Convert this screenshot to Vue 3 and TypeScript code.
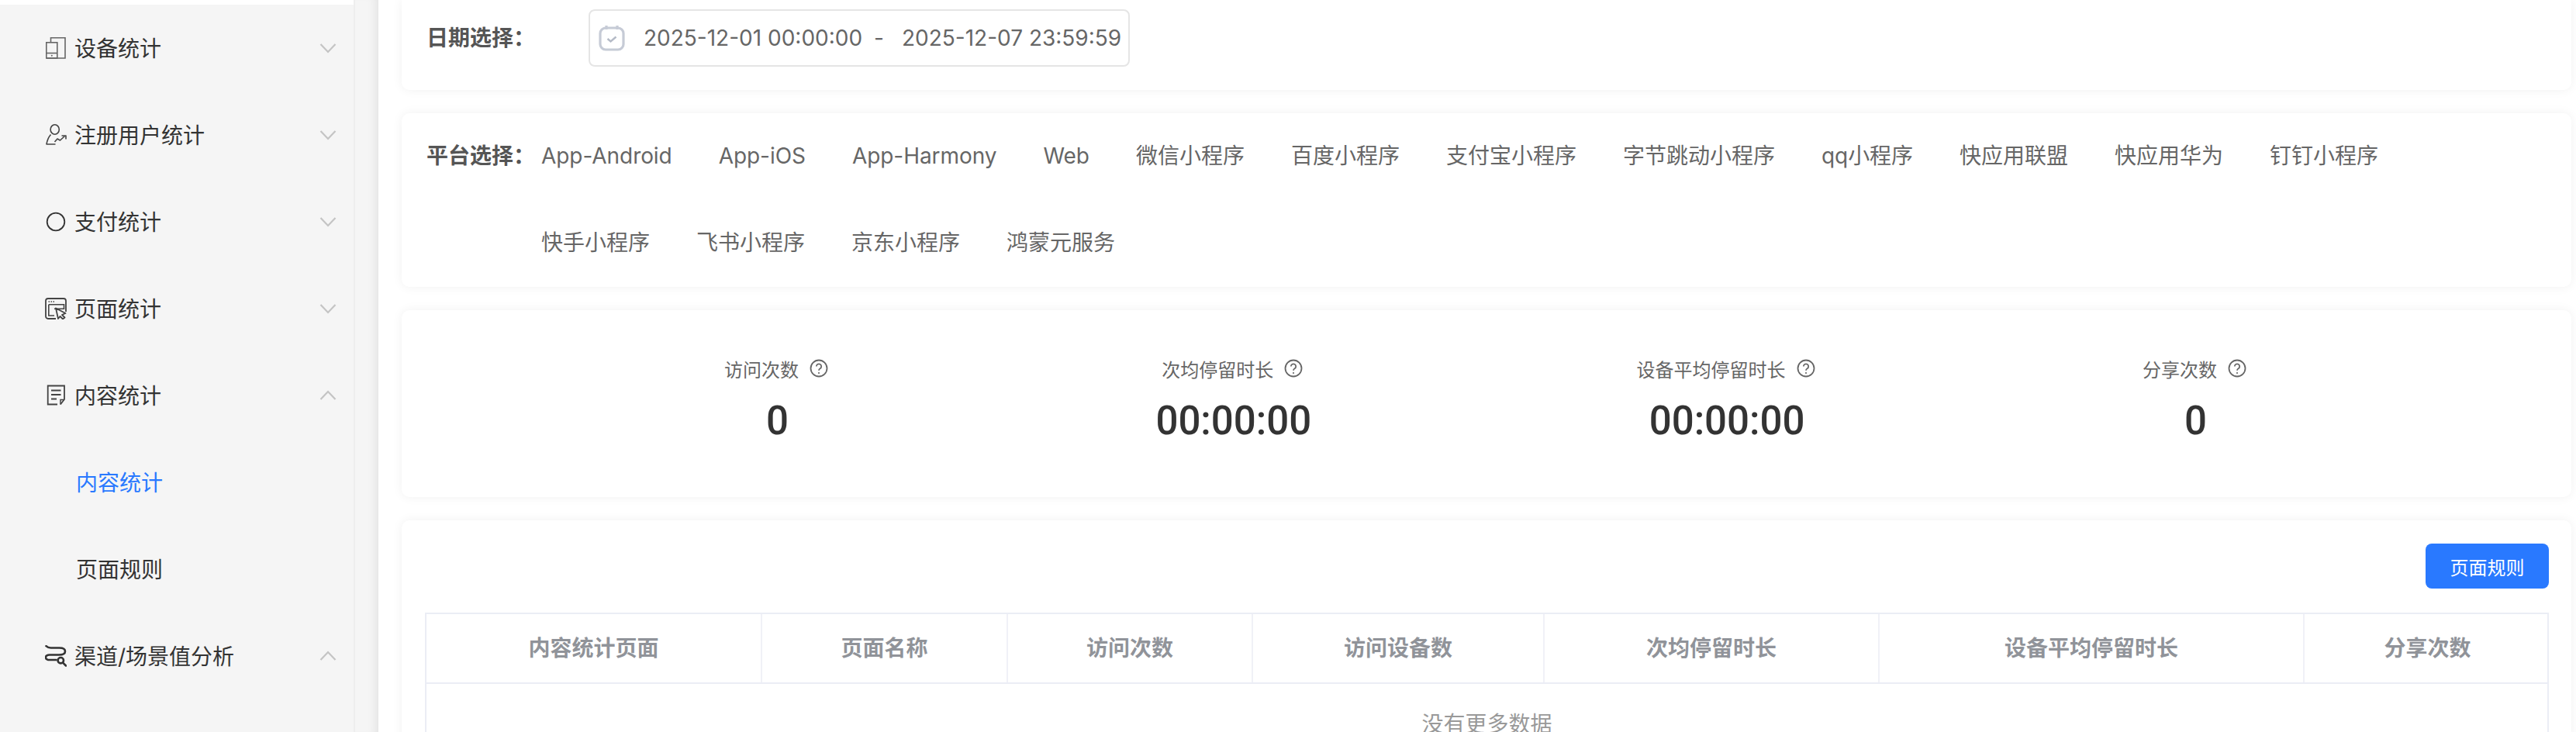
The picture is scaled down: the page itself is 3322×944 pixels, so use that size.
<script setup lang="ts">
interface MenuItem { label: string; icon: string; open?: boolean; child?: boolean; active?: boolean }
const menu: MenuItem[] = [
  { label: '设备统计', icon: 'device' },
  { label: '注册用户统计', icon: 'user' },
  { label: '支付统计', icon: 'pay' },
  { label: '页面统计', icon: 'page' },
  { label: '内容统计', icon: 'doc', open: true },
  { label: '内容统计', icon: '', child: true, active: true },
  { label: '页面规则', icon: '', child: true },
  { label: '渠道/场景值分析', icon: 'channel', open: true },
]
const platforms = ['App-Android', 'App-iOS', 'App-Harmony', 'Web', '微信小程序', '百度小程序', '支付宝小程序', '字节跳动小程序', 'qq小程序', '快应用联盟', '快应用华为', '钉钉小程序', '快手小程序', '飞书小程序', '京东小程序', '鸿蒙元服务']
const stats = [
  { label: '访问次数', value: '0' },
  { label: '次均停留时长', value: '00:00:00' },
  { label: '设备平均停留时长', value: '00:00:00' },
  { label: '分享次数', value: '0' },
]
const columns = [
  { label: '内容统计页面', width: 433 },
  { label: '页面名称', width: 317 },
  { label: '访问次数', width: 316 },
  { label: '访问设备数', width: 376 },
  { label: '次均停留时长', width: 432 },
  { label: '设备平均停留时长', width: 548 },
  { label: '分享次数', width: 317 },
]
const isLatin = (p: string) => /^[A-Za-z]/.test(p)
</script>

<template>
  <div class="page">
    <aside class="side">
      <div class="strip"></div>
      <div v-for="(m, i) in menu" :key="i" class="row" :class="{ child: m.child, active: m.active }">
        <svg v-if="m.icon === 'device'" class="ico" viewBox="0 0 28 28" fill="none" stroke="#666" stroke-width="1.6">
          <path d="M7.500 6V.8H26V27H2" />
          <rect x="1.800" y="6.800" width="14" height="20.200" />
          <path d="M1.800 20.500h14" />
          <circle cx="8.800" cy="23.800" r="1" fill="#666" stroke="none" />
        </svg>
        <svg v-else-if="m.icon === 'user'" class="ico" viewBox="0 0 28 28" fill="none" stroke="#444" stroke-width="1.6" stroke-linejoin="round">
          <ellipse cx="12.700" cy="7" rx="5.600" ry="6.200" />
          <path d="M7.500 13.500C4.500 17 2.800 21 2 26h11.500" />
          <path d="M12.500 23l3.500-4 3.500 2 6-5.500" />
          <path d="M21.500 15H27v4.500" />
        </svg>
        <svg v-else-if="m.icon === 'pay'" class="ico" viewBox="0 0 28 28" fill="none" stroke="#333" stroke-width="1.8">
          <circle cx="14" cy="14" r="11.300" />
        </svg>
        <svg v-else-if="m.icon === 'page'" class="ico" viewBox="0 0 28 28" fill="none" stroke="#444" stroke-width="1.8">
          <path d="M14 27H4a3 3 0 0 1-3-3V4a3 3 0 0 1 3-3h20a3 3 0 0 1 3 3v14" />
          <path d="M4.800 8.800h19.700v5.500H12M4.800 8.800V23H12" stroke-width="1.600" />
          <path d="M14 13.500l12.500 6.500-4.500 2 3.500 3.500-2.500 2-3.500-3.500-2.500 3z" stroke-linejoin="round" />
          <path d="M4.500 5h1.500M7.500 5H9M10.500 5H12" stroke-width="1.500" />
        </svg>
        <svg v-else-if="m.icon === 'doc'" class="ico" viewBox="0 0 28 28" fill="none" stroke="#444" stroke-width="1.8">
          <path d="M16 25.500H3.700V1.500H25v17.500l-5 6.500" />
          <path d="M8 7.500h12.500M8 13h12.500M8 18.500h7" />
          <path d="M25 19.500h-5v6" stroke-width="1.500" />
        </svg>
        <svg v-else-if="m.icon === 'channel'" class="ico" viewBox="0 0 28 28" fill="none" stroke="#333" stroke-width="2.600" stroke-linecap="round">
          <path d="M1.500 1.200c2 2 3 2.300 6 2.300h11c5 0 7.500 1.500 7.500 4.500s-3 4.500-8 4.500H6c-3 0-5 1-5 3.200s2 3.300 5 3.300h8.500" />
          <circle cx="20.300" cy="19.700" r="3.700" />
          <path d="M23.300 22.800l3.700 3.700" />
        </svg>
        <span class="row-label">{{ m.label }}</span>
        <svg v-if="!m.child" class="chev" :class="{ up: m.open }" viewBox="0 0 22 14" fill="none" stroke="#c4c4c4" stroke-width="2.200">
          <path d="M1.500 2L11 12l9.500-10" />
        </svg>
      </div>
    </aside>
    <div class="gutter"></div>
    <main class="main">
      <section class="card date-card">
        <span class="lab">日期选择：</span>
        <div class="date-box">
          <svg class="cal" viewBox="0 0 34 34" fill="none" stroke="#c6cbd6" stroke-width="3.200">
            <rect x="2" y="4" width="30" height="28" rx="7" />
            <path d="M10 1v5M24 1v5" />
            <path d="M11.500 18l4 3.500 7-6" stroke-width="2.400" stroke="#b4bac6" />
          </svg>
          <span class="date-t">2025-12-01 00:00:00</span>
          <span class="date-sep">-</span>
          <span class="date-t">2025-12-07 23:59:59</span>
        </div>
      </section>

      <section class="card plat-card">
        <span class="lab plat-lab">平台选择：</span>
        <div class="plats">
          <span v-for="p in platforms" :key="p" class="plat" :class="{ latin: isLatin(p) }">{{ p }}</span>
        </div>
      </section>

      <section class="card stat-card">
        <div v-for="s in stats" :key="s.label" class="stat">
          <div class="stat-l">
            <span>{{ s.label }}</span>
            <svg class="q" viewBox="0 0 24 24" fill="none" stroke="#666" stroke-width="1.800">
              <circle cx="12" cy="12" r="10.500" />
              <path d="M8.800 9.500a3.200 3.200 0 1 1 4.800 2.800c-1 .6-1.600 1.200-1.600 2.400" />
              <circle cx="12" cy="18" r="1.100" fill="#666" stroke="none" />
            </svg>
          </div>
          <div class="stat-v">{{ s.value }}</div>
        </div>
      </section>

      <section class="card table-card">
        <div class="tools"><button class="btn">页面规则</button></div>
        <div class="table">
          <div class="thead">
            <div v-for="c in columns" :key="c.label" class="th" :style="{ width: c.width + 'px' }">{{ c.label }}</div>
          </div>
          <div class="empty">没有更多数据</div>
        </div>
      </section>
    </main>
  </div>
</template>

<style>
html, body { margin: 0; background: #fff; overflow: hidden; }
</style>

<style scoped>
.page {
  width: 3322px;
  height: 944px;
  display: flex;
  overflow: hidden;
  font-family: Inter, "Noto Sans CJK SC", sans-serif;
  background: #fff;
}
.side {
  width: 456px;
  flex: none;
  background: #f5f5f5;
  border-right: 2px solid #eeeeee;
  box-sizing: content-box;
}
.strip { height: 6px; background: #fff; }
.row {
  height: 112px;
  display: flex;
  align-items: center;
  padding-left: 58px;
  padding-right: 22px;
  font-size: 28px;
  color: #333;
  position: relative;
}
.row.child { padding-left: 98px; }
.row.active { color: #2979ff; }
.ico { width: 28px; height: 28px; flex: none; margin-right: 10px; }
.row-label { flex: 1; white-space: nowrap; padding-bottom: 2px; }
.chev { width: 22px; height: 14px; flex: none; }
.chev.up { transform: rotate(180deg); }
.gutter { width: 30px; flex: none; background: #f5f5f5; box-shadow: inset -12px 0 12px -8px rgba(0,0,0,.07); }
.main {
  flex: 1;
  min-width: 0;
  background: #fff;
  padding: 0 6px 0 30px;
  display: flex;
  flex-direction: column;
  gap: 30px;
}
.card {
  background: #fff;
  border-radius: 10px;
  box-shadow: 0 0 14px rgba(0,0,0,.06);
  flex: none;
}
.date-card {
  height: 116px;
  display: flex;
  align-items: flex-start;
  padding: 12px 0 0 32px;
  box-sizing: border-box;
  border-top-left-radius: 0;
  border-top-right-radius: 0;
}
.lab { font-size: 28px; font-weight: 700; color: #555; width: 209px; line-height: 74px; white-space: nowrap; flex: none; }
.date-box {
  width: 698px;
  height: 74px;
  box-sizing: border-box;
  border: 2px solid #e5e5e5;
  border-radius: 8px;
  display: flex;
  align-items: center;
  padding-left: 11px;
  font-size: 28px;
  color: #666;
}
.cal { width: 34px; height: 34px; flex: none; margin-right: 24px; }
.date-t { white-space: nowrap; }
.date-sep { margin: 0 23px 0 15px; }
.plat-card {
  height: 224px;
  display: flex;
  padding-left: 32px;
  box-sizing: border-box;
}
.plat-lab { width: 148px; line-height: 110px; }
.plats { width: 2540px; display: flex; flex-wrap: wrap; }
.plat { height: 112px; line-height: 110px; margin-right: 60px; font-size: 28px; color: #666; white-space: nowrap; }
.plat.latin { letter-spacing: -.06px; }
.stat-card {
  height: 241px;
  display: flex;
  justify-content: space-between;
  padding: 0 416px;
  box-sizing: border-box;
}
.stat { display: flex; flex-direction: column; align-items: center; padding-top: 60px; }
.stat-l { display: flex; align-items: center; gap: 14px; font-size: 24px; color: #666; height: 30px; padding-right: 3px; }
.q { width: 24px; height: 24px; flex: none; }
.stat-v { font-family: Roboto, sans-serif; font-size: 51px; font-weight: 500; color: #333; margin-top: 23px; line-height: 60px; }
.table-card { padding: 0 29px 0 30px; }
.tools { display: flex; justify-content: flex-end; padding-top: 30px; height: 119px; box-sizing: border-box; }
.btn {
  width: 159px;
  height: 58px;
  border: 0;
  border-radius: 8px;
  background: #2979ff;
  color: #fff;
  font-size: 24px;
  font-family: inherit;
  padding: 0;
}
.table { border: 2px solid #ebedf5; border-bottom: 0; box-sizing: border-box; }
.thead { display: flex; border-bottom: 2px solid #ebedf5; height: 88px; box-sizing: content-box; }
.th {
  flex: none;
  box-sizing: border-box;
  border-right: 2px solid #f0f1f7;
  text-align: center;
  line-height: 88px;
  font-size: 28px;
  font-weight: 700;
  color: #909399;
}
.th:last-child { border-right: 0; }
.empty { text-align: center; font-size: 28px; color: #999; padding-top: 32px; line-height: 40px; height: 100px; box-sizing: border-box; }
</style>
